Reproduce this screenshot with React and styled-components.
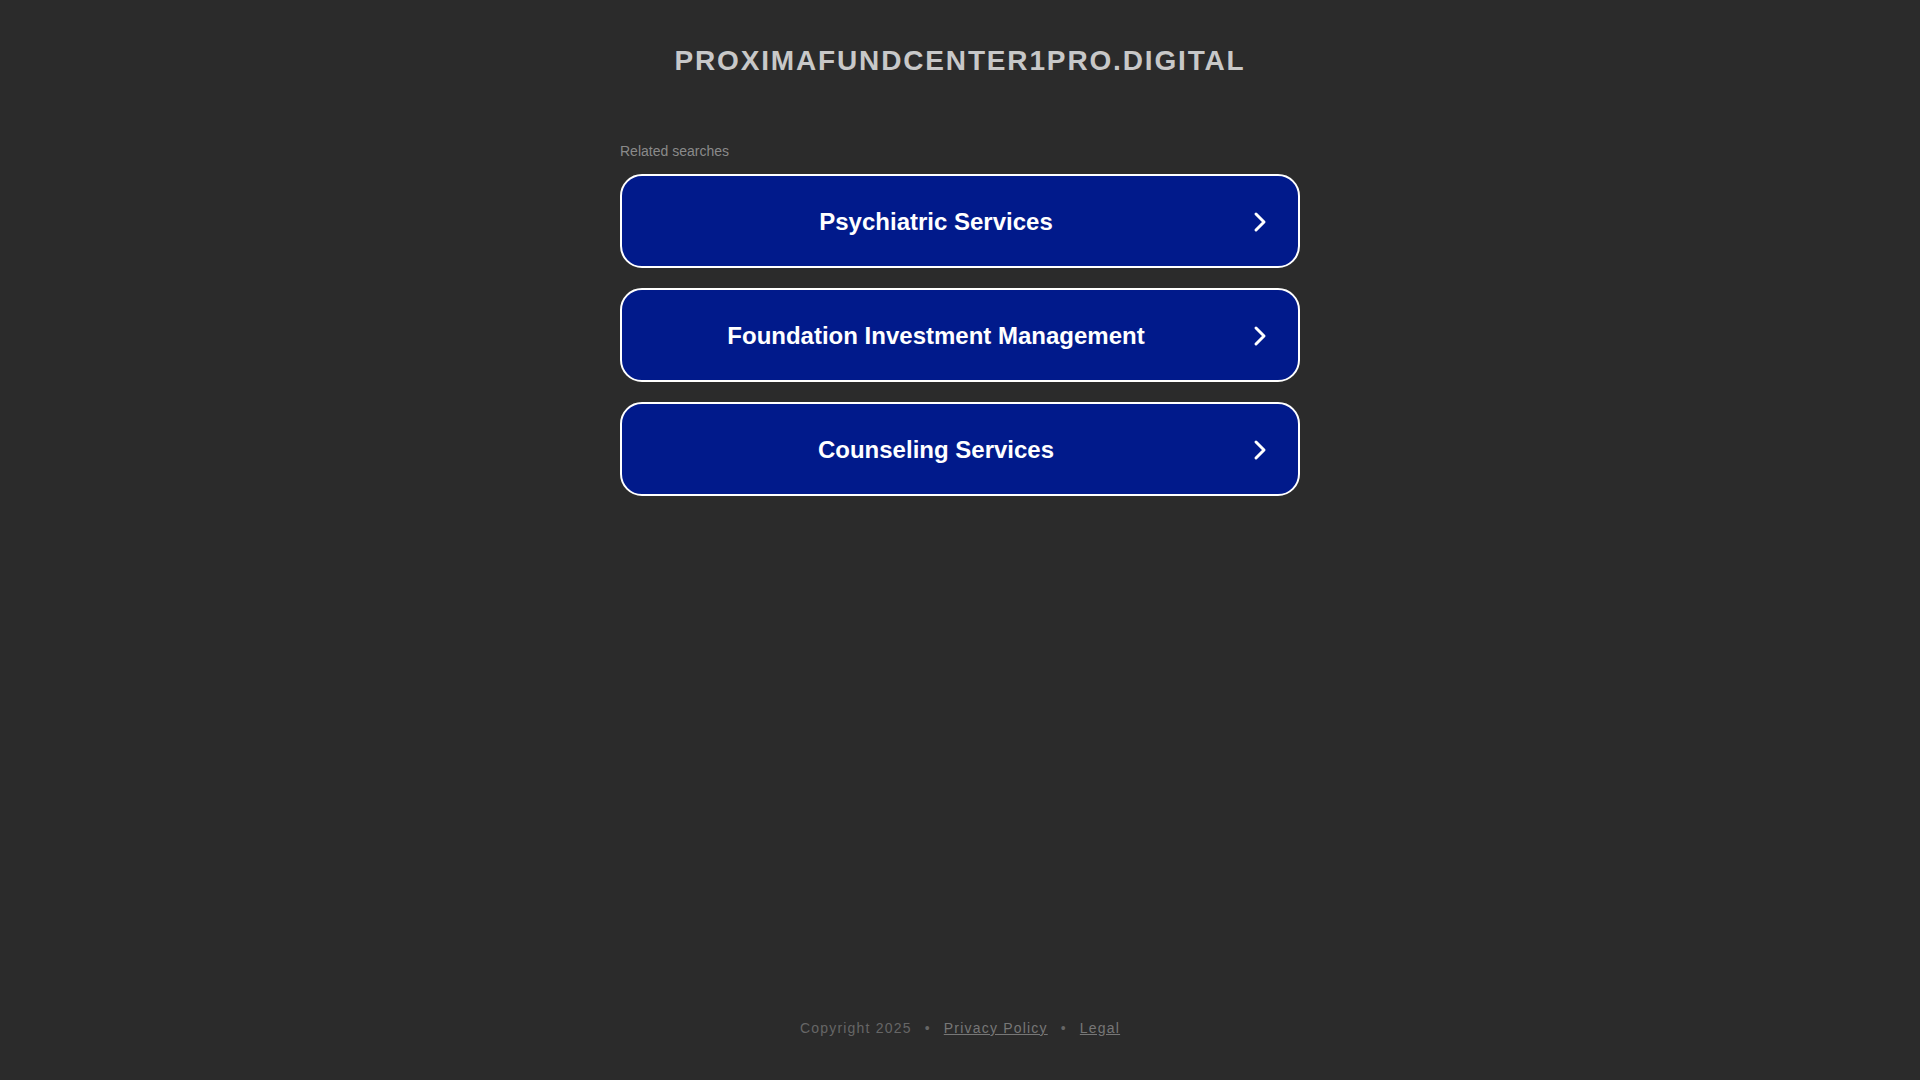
import React from "react";
import styled, { createGlobalStyle } from "styled-components";

const GlobalStyle = createGlobalStyle`
  html, body {
    margin: 0;
    padding: 0;
    background: #2b2b2b;
    font-family: "Liberation Sans", Arial, sans-serif;
  }
`;

const searches = [
  "Psychiatric Services",
  "Foundation Investment Management",
  "Counseling Services",
];

const Chevron = () => (
  <svg width="24" height="24" viewBox="0 0 24 24" fill="none">
    <path
      d="M8 4 L16 12 L8 20"
      stroke="#fff"
      strokeWidth="3"
      strokeLinecap="round"
      strokeLinejoin="round"
    />
  </svg>
);

const App = () => {
  return (
    <Page>
      <GlobalStyle />
      <Header>PROXIMAFUNDCENTER1PRO.DIGITAL</Header>
      <Main>
        <Label>Related searches</Label>
        <List>
          {searches.map((s) => (
            <SearchLink key={s} href="#">
              <LinkText>{s}</LinkText>
              <Arrow>
                <Chevron />
              </Arrow>
            </SearchLink>
          ))}
        </List>
      </Main>
      <Footer>
        <span>Copyright 2025</span>
        <Dot>•</Dot>
        <FooterLink href="#">Privacy Policy</FooterLink>
        <Dot>•</Dot>
        <FooterLink href="#">Legal</FooterLink>
      </Footer>
    </Page>
  );
};

export default App;

const Page = styled.div`
  min-height: 100vh;
  display: flex;
  flex-direction: column;
  align-items: center;
  box-sizing: border-box;
`;

const Header = styled.h1`
  margin: 45px 0 0;
  font-size: 28px;
  line-height: 32px;
  font-weight: 700;
  letter-spacing: 1.85px;
  color: #c8c8c8;
  text-align: center;
`;

const Main = styled.main`
  width: 680px;
  margin-top: 66px;
`;

const Label = styled.div`
  font-size: 14px;
  line-height: 16px;
  color: #8a8a8a;
  margin-bottom: 15px;
`;

const List = styled.div`
  display: flex;
  flex-direction: column;
  gap: 20px;
`;

const SearchLink = styled.a`
  display: flex;
  align-items: center;
  height: 94px;
  box-sizing: border-box;
  background: #011a8b;
  border: 2px solid #ffffff;
  border-radius: 22px;
  padding: 2px 26px 0 2px;
  text-decoration: none;
  color: #ffffff;
`;

const LinkText = styled.span`
  flex: 1;
  text-align: center;
  font-size: 24px;
  font-weight: 700;
`;

const Arrow = styled.span`
  display: flex;
  width: 24px;
  height: 24px;
`;

const Footer = styled.footer`
  margin-top: auto;
  padding-bottom: 44px;
  display: flex;
  align-items: center;
  gap: 13px;
  font-size: 14px;
  line-height: 16px;
  letter-spacing: 1.2px;
  color: #666666;
`;

const Dot = styled.span`
  color: #666666;
`;

const FooterLink = styled.a`
  color: #777777;
  text-decoration: underline;
`;
